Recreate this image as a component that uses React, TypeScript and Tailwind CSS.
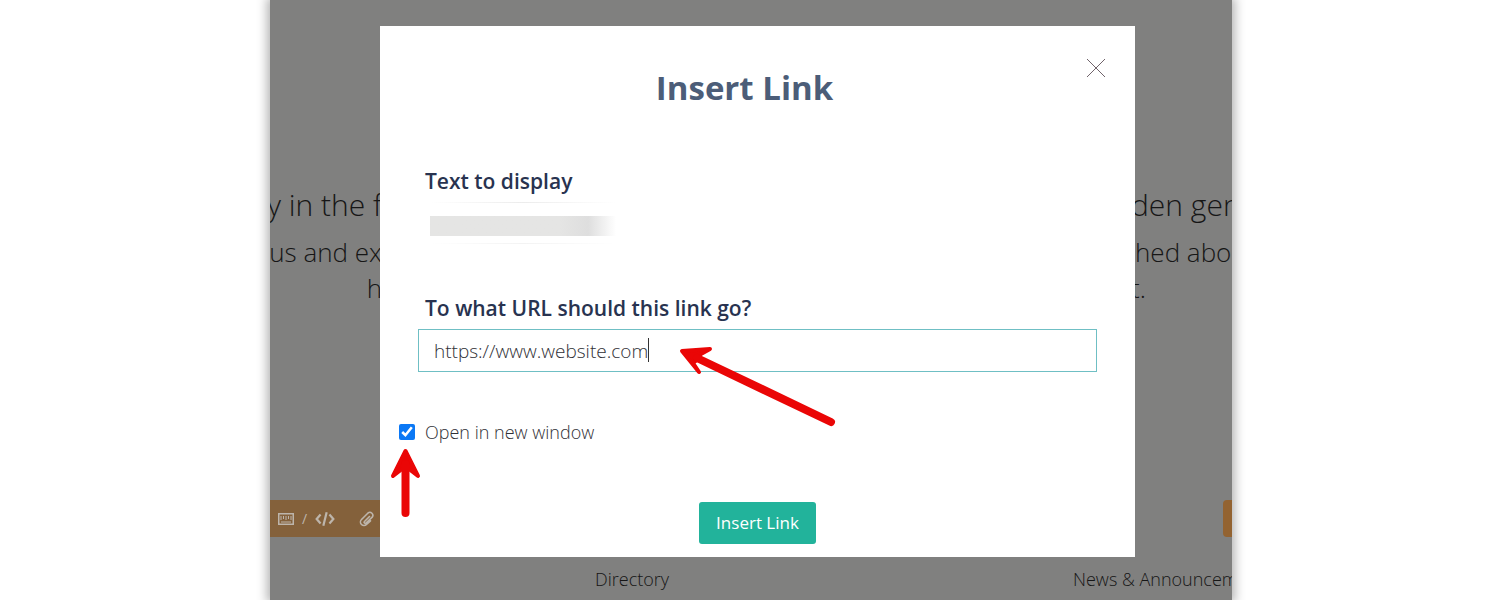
import { useState } from "react";

const lines = [
  { left: "y in the f", right: "den gems", row: "h-12 text-[30px]", pad: "pl-0" },
  { left: "us and ex", right: "hed about", row: "h-12 text-[26px]", pad: "pl-1" },
  { left: "h", right: "t.", row: "h-6 text-[26px]", pad: "pl-0" },
];

function PageBehind() {
  return (
    <div className="font-light text-[#161616]">
      <div className="pt-[180px]">
        {lines.map((line) => (
          <div key={line.left} className={`flex items-center justify-between whitespace-nowrap ${line.row}`}>
            <div className="flex w-28 justify-end overflow-hidden">{line.left}</div>
            <div className={`w-[101px] overflow-hidden ${line.pad}`}>{line.right}</div>
          </div>
        ))}
      </div>

      <div className="mt-[200px] flex h-[37px] justify-between">
        <div className="flex w-1/2 items-center bg-[#84613b] pl-2 text-[#bdb5ab]">
          <svg className="h-3 w-4" viewBox="0 0 16 12" fill="none" stroke="currentColor">
            <rect x="0.75" y="0.75" width="14.5" height="10.5" strokeWidth="1.5" />
            <path d="M3 3v4M5.5 3v3M8 3v4M10.5 3v3M13 3v4M3 9h10" strokeWidth="1" />
          </svg>
          <span className="px-2 text-sm font-normal">/</span>
          <svg className="h-4 w-5" viewBox="0 0 18 14" fill="none" stroke="currentColor" strokeWidth="2">
            <path d="M5 3L1.500 7L5 11M13 3L16.500 7L13 11M10.500 1L7.500 13" />
          </svg>
          <svg className="ml-6 size-4" viewBox="0 0 16 16" fill="none" stroke="currentColor" strokeWidth="1.6" strokeLinecap="round">
            <path d="M10.500 5.500L5.500 10.500a1 1 0 0 0 1.500 1.500l6.200-5.800a3 3 0 0 0-4.200-4.200l-6.500 6.500a3.500 3.500 0 0 0 5 5l4-3.700" />
          </svg>
        </div>
        <div className="w-[9px] rounded-l-sm bg-[#936331]" />
      </div>

      <div className="mt-7 flex h-7 items-center justify-between overflow-hidden text-lg whitespace-nowrap">
        <span className="pl-[325px]">Directory</span>
        <span className="w-[159px] overflow-hidden">News &amp; Announcements</span>
      </div>
    </div>
  );
}

function Arrows() {
  return (
    <svg
      className="pointer-events-none absolute top-0 left-0 h-[531px] w-[500px]"
      viewBox="380 26 500 531"
      fill="#ea0606"
      stroke="#ea0606"
      strokeLinejoin="round"
      strokeLinecap="round"
    >
      <path d="M682 351L710 349L701 354L697 360L693 363L699 372Z" strokeWidth="4" />
      <path d="M697 358L831 422" strokeWidth="8" />
      <path d="M405.500 451L418 476L409 469H402L393 476Z" strokeWidth="4" />
      <path d="M405.500 464V513" strokeWidth="8" />
    </svg>
  );
}

export default function App() {
  const [url, setUrl] = useState("https://www.website.com");
  const [newWindow, setNewWindow] = useState(true);

  return (
    <div className="min-h-screen overflow-hidden bg-white font-['Open_Sans',sans-serif]">
      <div className="relative mr-[268px] ml-[270px] min-h-screen bg-[#80807f] shadow-[0_0_10px_3px_rgba(0,0,0,0.3)]">
        <PageBehind />

        <div role="dialog" aria-labelledby="title" className="absolute top-[26px] right-[97px] left-[110px] bg-white px-[38px] pt-10 pb-[13px]">
          <button type="button" aria-label="Close" className="absolute top-8 right-[29px]">
            <svg className="size-5" viewBox="0 0 20 20" stroke="#70636a" strokeWidth="1">
              <path d="M1 1L19 19M19 1L1 19" />
            </svg>
          </button>

          <h1 id="title" className="pr-[26px] text-center text-[33px] leading-[44px] font-bold text-[#4c5d78]">
            Insert Link
          </h1>

          <form onSubmit={(e) => e.preventDefault()}>
            <p className="mt-[57px] pl-[7px] text-[21px] leading-7 font-semibold text-[#283350]">Text to display</p>
            <div className="mt-[7px] ml-3 h-[42px] w-[186px]">
              <div className="h-px bg-linear-to-r from-white via-[#ececec] to-white" />
              <div className="mt-[13px] h-5 bg-linear-to-r from-[#e5e5e4] from-70% via-[#dedede] via-85% to-white" />
              <div className="mt-[7px] h-px bg-linear-to-r from-white via-[#f3f3f3] to-white" />
            </div>

            <label htmlFor="url" className="mt-[50px] block pl-[7px] text-[21px] leading-7 font-semibold text-[#283350]">
              To what URL should this link go?
            </label>
            <div className="relative mt-[7px]">
              <input
                id="url"
                type="text"
                value={url}
                onChange={(e) => setUrl(e.target.value)}
                className="block h-[43px] w-full border border-[#6fbfc4] px-[15px] text-[19px] font-light text-[#303036] outline-none"
              />
              {/* caret */}
              <span className="absolute top-[9px] left-[230px] h-6 w-px bg-[#333333]" />
            </div>

            <div className="mt-[46px] -ml-[19px] flex h-7 items-center gap-[10px]">
              <input
                id="new-window"
                type="checkbox"
                checked={newWindow}
                onChange={(e) => setNewWindow(e.target.checked)}
                className="size-4 accent-[#0b78f5]"
              />
              <label htmlFor="new-window" className="text-lg font-light text-[#303036]">
                Open in new window
              </label>
            </div>

            <div className="mt-14 flex justify-center">
              <button type="submit" className="h-[42px] rounded-[3px] bg-[#22b39b] px-[17px] text-[17px] text-white">
                Insert Link
              </button>
            </div>
          </form>

          <Arrows />
        </div>
      </div>
    </div>
  );
}
